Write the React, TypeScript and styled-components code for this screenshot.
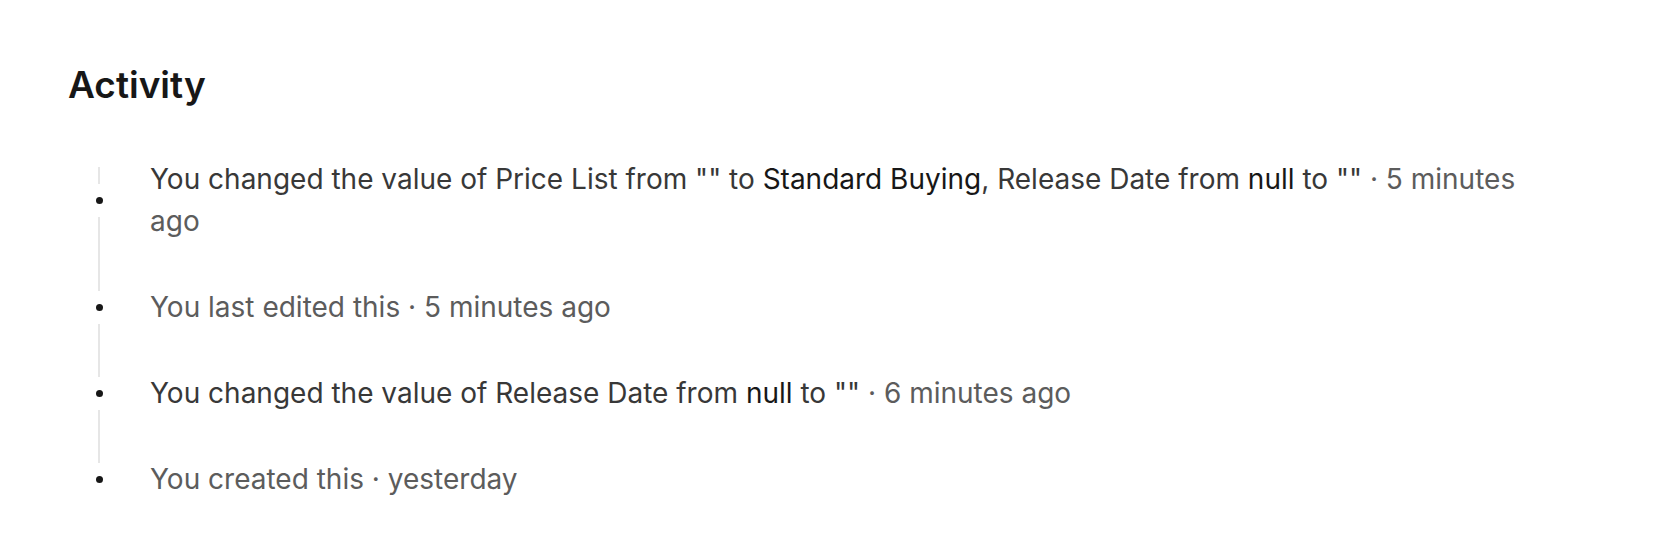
import React from 'react';
import styled, { createGlobalStyle } from 'styled-components';

const GlobalStyle = createGlobalStyle`
  html, body {
    margin: 0;
    padding: 0;
    background: #ffffff;
  }
  body {
    font-family: Inter, "Noto Sans", "Liberation Sans", sans-serif;
    -webkit-font-smoothing: antialiased;
  }
`;

const Page = styled.div`
  padding: 63px 68px 0;
`;

const Heading = styled.h2`
  margin: 0 0 29px;
  font-size: 37px;
  line-height: 44px;
  font-weight: 600;
  color: #171717;
`;

const List = styled.ul`
  list-style: none;
  margin: 0;
  padding: 0;
  max-width: 1472px;
`;

const Row = styled.li`
  display: grid;
  grid-template-columns: 62px 1fr;
  column-gap: 20px;
`;

const Rail = styled.div`
  display: flex;
  flex-direction: column;
  align-items: center;
`;

// $offset leaves the top of the segment empty (the rail starts a bit below the first row's top)
const Segment = styled.div<{ $hidden?: boolean; $offset?: number }>`
  flex: 1;
  width: 2px;
  background: ${({ $hidden, $offset = 0 }) =>
    $hidden
      ? 'transparent'
      : `linear-gradient(to bottom, transparent ${$offset}px, #e6e6e6 ${$offset}px)`};
`;

const Dot = styled.span`
  width: 7px;
  height: 7px;
  margin: 13px 0;
  border-radius: 50%;
  background: #171717;
  flex: none;
`;

const Text = styled.p<{ $muted?: boolean }>`
  margin: 0;
  padding: 22px 0;
  font-size: 28px;
  line-height: 42px;
  color: ${({ $muted }) => ($muted ? '#5c5c5c' : '#383838')};
`;

const Strong = styled.span`
  color: #171717;
`;

const Time = styled.span`
  color: #5c5c5c;
`;

interface Item {
  body: React.ReactNode;
  time: string;
  muted?: boolean;
}

const items: Item[] = [
  {
    body: (
      <>
        You changed the value of Price List from "" to <Strong>Standard Buying</Strong>, Release Date
        from <Strong>null</Strong> to ""
      </>
    ),
    time: '5 minutes ago',
  },
  { body: 'You last edited this', time: '5 minutes ago', muted: true },
  {
    body: (
      <>
        You changed the value of Release Date from <Strong>null</Strong> to ""
      </>
    ),
    time: '6 minutes ago',
  },
  { body: 'You created this', time: 'yesterday', muted: true },
];

const App: React.FC = () => {
  return (
    <>
      <GlobalStyle />
      <Page>
        <Heading>Activity</Heading>
        <List>
          {items.map((item, i) => (
            <Row key={i}>
              <Rail>
                <Segment $offset={i === 0 ? 31 : 0} />
                <Dot />
                <Segment $hidden={i === items.length - 1} />
              </Rail>
              <Text $muted={item.muted}>
                {item.body} <Time>· {item.time}</Time>
              </Text>
            </Row>
          ))}
        </List>
      </Page>
    </>
  );
};

export default App;
